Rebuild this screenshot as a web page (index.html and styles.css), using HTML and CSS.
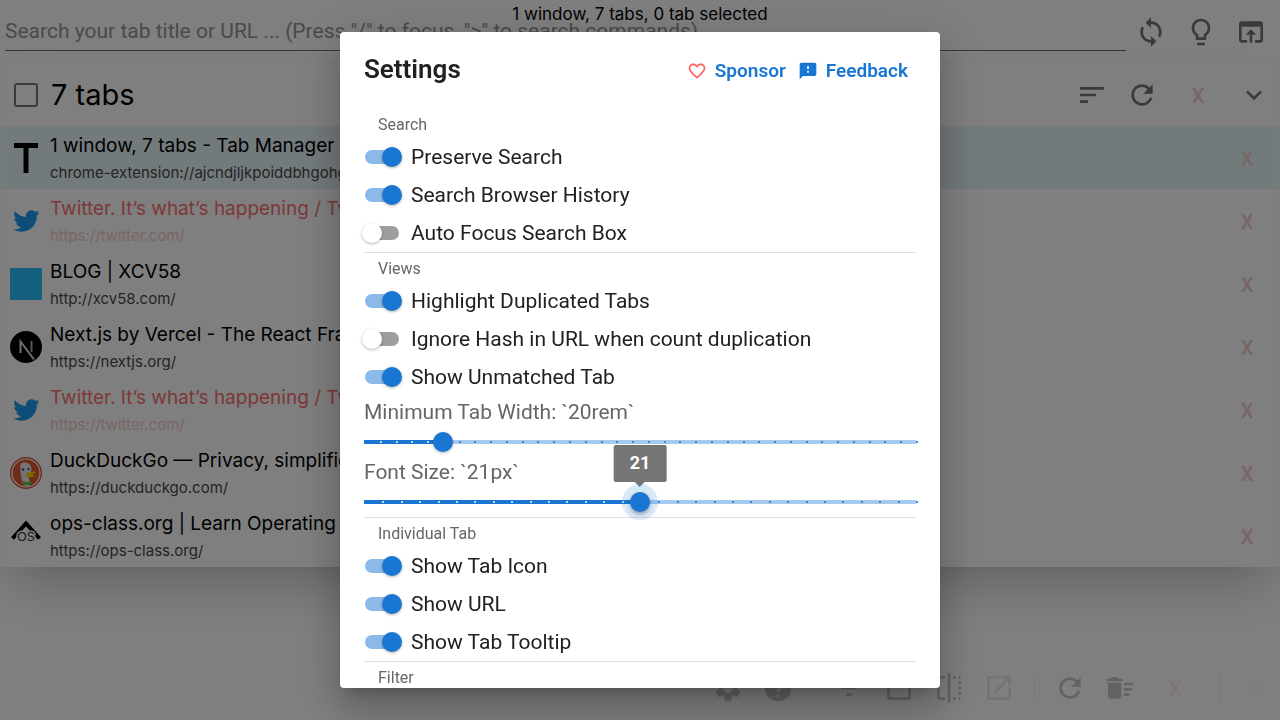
FILE: index.html
```html
<!DOCTYPE html>
<html lang="en">
<head>
<meta charset="utf-8">
<title>Tab Manager</title>
<link rel="stylesheet" href="styles.css">
</head>
<body>
<svg class="defs" aria-hidden="true">
  <symbol id="i-sync" viewBox="0 0 24 24"><path d="M12 4V1L8 5l4 4V6c3.31 0 6 2.69 6 6 0 1.01-.25 1.97-.7 2.8l1.46 1.46C19.54 15.03 20 13.57 20 12c0-4.42-3.58-8-8-8zm0 14c-3.31 0-6-2.69-6-6 0-1.01.25-1.97.7-2.8L5.24 7.74C4.46 8.97 4 10.43 4 12c0 4.42 3.58 8 8 8v3l4-4-4-4v3z"/></symbol>
  <symbol id="i-bulb" viewBox="0 0 24 24"><path d="M9 21c0 .55.45 1 1 1h4c.55 0 1-.45 1-1v-1H9v1zm3-19C8.14 2 5 5.14 5 9c0 2.38 1.19 4.47 3 5.74V17c0 .55.45 1 1 1h6c.55 0 1-.45 1-1v-2.26c1.81-1.27 3-3.36 3-5.74 0-3.86-3.14-7-7-7zm2.85 11.1-.85.6V16h-4v-2.3l-.85-.6C7.8 12.16 7 10.63 7 9c0-2.76 2.24-5 5-5s5 2.24 5 5c0 1.63-.8 3.16-2.15 4.1z"/></symbol>
  <symbol id="i-browser" viewBox="0 0 24 24"><path d="M19 4H5c-1.11 0-2 .9-2 2v12c0 1.1.89 2 2 2h4v-2H5V8h14v10h-4v2h4c1.1 0 2-.9 2-2V6c0-1.1-.89-2-2-2zm-7 6-4 4h3v6h2v-6h3l-4-4z"/></symbol>
  <symbol id="i-sort" viewBox="0 0 24 24"><path d="M3 18h6v-2H3v2zM3 6v2h18V6H3zm0 7h12v-2H3v2z"/></symbol>
  <symbol id="i-refresh" viewBox="0 0 24 24"><path d="M17.65 6.35C16.2 4.9 14.21 4 12 4c-4.42 0-7.99 3.58-7.99 8s3.57 8 7.99 8c3.73 0 6.84-2.55 7.73-6h-2.08c-.82 2.33-3.04 4-5.65 4-3.31 0-6-2.69-6-6s2.69-6 6-6c1.66 0 3.14.69 4.22 1.78L13 11h7V4l-2.35 2.35z"/></symbol>
  <symbol id="i-more" viewBox="0 0 24 24"><path d="M16.59 8.59 12 13.17 7.41 8.59 6 10l6 6 6-6z"/></symbol>
  <symbol id="i-gear" viewBox="0 0 24 24"><path d="M19.14 12.94c.04-.3.06-.61.06-.94 0-.32-.02-.64-.07-.94l2.03-1.58c.18-.14.23-.41.12-.61l-1.92-3.32c-.12-.22-.37-.29-.59-.22l-2.39.96c-.5-.38-1.03-.7-1.62-.94l-.36-2.54c-.04-.24-.24-.41-.48-.41h-3.84c-.24 0-.43.17-.47.41l-.36 2.54c-.59.24-1.13.57-1.62.94l-2.39-.96c-.22-.08-.47 0-.59.22L2.74 8.87c-.12.21-.08.47.12.61l2.03 1.58c-.05.3-.09.63-.09.94s.02.64.07.94l-2.03 1.58c-.18.14-.23.41-.12.61l1.92 3.32c.12.22.37.29.59.22l2.39-.96c.5.38 1.03.7 1.62.94l.36 2.54c.05.24.24.41.48.41h3.84c.24 0 .44-.17.47-.41l.36-2.54c.59-.24 1.13-.56 1.62-.94l2.39.96c.22.08.47 0 .59-.22l1.92-3.32c.12-.22.07-.47-.12-.61l-2.01-1.58zM12 15.6c-1.98 0-3.6-1.62-3.6-3.6s1.62-3.6 3.6-3.6 3.6 1.62 3.6 3.6-1.62 3.6-3.6 3.6z"/></symbol>
  <symbol id="i-help" viewBox="0 0 24 24"><path d="M12 2C6.48 2 2 6.48 2 12s4.48 10 10 10 10-4.48 10-10S17.52 2 12 2zm1 17h-2v-2h2v2zm2.07-7.75-.9.92C13.45 12.9 13 13.5 13 15h-2v-.5c0-1.1.45-2.1 1.17-2.83l1.24-1.26c.37-.36.59-.86.59-1.41 0-1.1-.9-2-2-2s-2 .9-2 2H8c0-2.21 1.79-4 4-4s4 1.79 4 4c0 .88-.36 1.68-.93 2.25z"/></symbol>
  <symbol id="i-filter" viewBox="0 0 24 24"><path d="M10 18h4v-2h-4v2zM3 6v2h18V6H3zm3 7h12v-2H6v2z"/></symbol>
  <symbol id="i-box" viewBox="0 0 24 24"><path d="M19 5v14H5V5h14m0-2H5c-1.1 0-2 .9-2 2v14c0 1.1.9 2 2 2h14c1.1 0 2-.9 2-2V5c0-1.1-.9-2-2-2z"/></symbol>
  <symbol id="i-flip" viewBox="0 0 24 24"><path d="M15 21h2v-2h-2v2zm4-12h2V7h-2v2zM3 5v14c0 1.1.9 2 2 2h4v-2H5V5h4V3H5c-1.1 0-2 .9-2 2zm16-2v2h2c0-1.1-.9-2-2-2zm-8 20h2V1h-2v22zm8-6h2v-2h-2v2zM15 5h2V3h-2v2zm4 8h2v-2h-2v2zm0 8c1.1 0 2-.9 2-2h-2v2z"/></symbol>
  <symbol id="i-launch" viewBox="0 0 24 24"><path d="M19 19H5V5h7V3H5c-1.11 0-2 .9-2 2v14c0 1.1.89 2 2 2h14c1.1 0 2-.9 2-2v-7h-2v7zM14 3v2h3.59l-9.83 9.83 1.41 1.41L19 6.41V10h2V3h-7z"/></symbol>
  <symbol id="i-sweep" viewBox="0 0 24 24"><path d="M15 16h4v2h-4zm0-8h7v2h-7zm0 4h6v2h-6zM3 18c0 1.1.9 2 2 2h6c1.1 0 2-.9 2-2V8H3v10zM14 5h-3l-1-1H6L5 5H2v2h12z"/></symbol>
  <symbol id="i-next" viewBox="0 0 24 24"><path d="M10 6 8.59 7.41 13.17 12l-4.58 4.59L10 18l6-6z"/></symbol>
  <symbol id="i-heart" viewBox="0 0 24 24"><path d="M16.5 3c-1.74 0-3.41.81-4.5 2.09C10.91 3.81 9.24 3 7.5 3 4.42 3 2 5.42 2 8.5c0 3.78 3.4 6.86 8.55 11.54L12 21.35l1.45-1.32C18.6 15.36 22 12.28 22 8.5 22 5.42 19.58 3 16.5 3zm-4.4 15.55-.1.1-.1-.1C7.14 14.24 4 11.39 4 8.5 4 6.5 5.5 5 7.5 5c1.54 0 3.04.99 3.57 2.36h1.87C13.46 5.99 14.96 5 16.5 5c2 0 3.5 1.5 3.5 3.5 0 2.89-3.14 5.74-7.9 10.05z"/></symbol>
  <symbol id="i-feedback" viewBox="0 0 24 24"><path d="M20 2H4c-1.1 0-1.99.9-1.99 2L2 22l4-4h14c1.1 0 2-.9 2-2V4c0-1.1-.9-2-2-2zm-7 12h-2v-2h2v2zm0-4h-2V6h2v4z"/></symbol>
  <symbol id="i-bird" viewBox="0 0 24 24"><path d="M23.643 4.937c-.835.37-1.732.62-2.675.733.962-.576 1.7-1.49 2.048-2.578-.9.534-1.897.922-2.958 1.13-.85-.904-2.06-1.47-3.4-1.47-2.572 0-4.658 2.086-4.658 4.66 0 .364.042.718.12 1.06-3.873-.195-7.304-2.05-9.602-4.868-.4.69-.63 1.49-.63 2.342 0 1.616.823 3.043 2.072 3.878-.764-.025-1.482-.234-2.11-.583v.06c0 2.257 1.605 4.14 3.737 4.568-.392.106-.803.162-1.227.162-.3 0-.593-.028-.877-.082.593 1.85 2.313 3.198 4.352 3.234-1.595 1.25-3.604 1.995-5.786 1.995-.376 0-.747-.022-1.112-.065 2.062 1.323 4.51 2.093 7.14 2.093 8.57 0 13.255-7.098 13.255-13.254 0-.2-.005-.402-.014-.602.91-.658 1.7-1.477 2.323-2.41z"/></symbol>
</svg>

<div class="app">
  <p class="summary">1 window, 7 tabs, 0 tab selected</p>
  <header class="topbar">
    <input class="search" type="text" aria-label="Search tabs" placeholder='Search your tab title or URL ... (Press "/" to focus, "&gt;" to search commands)'>
    <div class="topbar-actions">
      <button class="icon-btn" aria-label="Sync"><svg class="icon"><use href="#i-sync"/></svg></button>
      <button class="icon-btn" aria-label="Theme"><svg class="icon"><use href="#i-bulb"/></svg></button>
      <button class="icon-btn" aria-label="Open in browser"><svg class="icon"><use href="#i-browser"/></svg></button>
    </div>
  </header>

  <main class="window">
    <div class="window-head">
      <input class="pick" type="checkbox" id="pick-all">
      <label class="window-title" for="pick-all">7 tabs</label>
      <div class="window-actions">
        <button class="icon-btn" aria-label="Sort"><svg class="icon"><use href="#i-sort"/></svg></button>
        <button class="icon-btn" aria-label="Reload"><svg class="icon"><use href="#i-refresh"/></svg></button>
        <button class="icon-btn close" aria-label="Close window">x</button>
        <button class="icon-btn" aria-label="Collapse"><svg class="icon"><use href="#i-more"/></svg></button>
      </div>
    </div>
    <ul class="tabs">
      <li class="tab current">
        <svg class="favicon" viewBox="0 0 32 32"><path d="M4 1h24v5H18.500v25h-5V6H4z" fill="#000"/></svg>
        <div class="tab-text"><span class="tab-title">1 window, 7 tabs - Tab Manager v2</span><span class="tab-url">chrome-extension://ajcndjljkpoiddbhgohg</span></div>
        <button class="icon-btn close" aria-label="Close tab">x</button>
      </li>
      <li class="tab duplicate">
        <svg class="favicon bird" viewBox="0 0 32 32"><use href="#i-bird" x="2" y="2" width="28" height="28"/></svg>
        <div class="tab-text"><span class="tab-title">Twitter. It’s what’s happening / Twitter</span><span class="tab-url">https://twitter.com/</span></div>
        <button class="icon-btn close" aria-label="Close tab">x</button>
      </li>
      <li class="tab">
        <svg class="favicon" viewBox="0 0 32 32"><path d="M0 0h32v32H0z" fill="#2cc0ff"/></svg>
        <div class="tab-text"><span class="tab-title">BLOG | XCV58</span><span class="tab-url">http://xcv58.com/</span></div>
        <button class="icon-btn close" aria-label="Close tab">x</button>
      </li>
      <li class="tab">
        <svg class="favicon" viewBox="0 0 32 32"><circle cx="16" cy="16" r="16"/><path d="M10.500 22V10.500L24 28.500" fill="none" stroke="#ddd" stroke-width="2"/><path d="M21.500 10v11" stroke="#aaa" stroke-width="2"/></svg>
        <div class="tab-text"><span class="tab-title">Next.js by Vercel - The React Framework</span><span class="tab-url">https://nextjs.org/</span></div>
        <button class="icon-btn close" aria-label="Close tab">x</button>
      </li>
      <li class="tab duplicate">
        <svg class="favicon bird" viewBox="0 0 32 32"><use href="#i-bird" x="2" y="2" width="28" height="28"/></svg>
        <div class="tab-text"><span class="tab-title">Twitter. It’s what’s happening / Twitter</span><span class="tab-url">https://twitter.com/</span></div>
        <button class="icon-btn close" aria-label="Close tab">x</button>
      </li>
      <li class="tab">
        <svg class="favicon" viewBox="0 0 32 32"><circle cx="16" cy="16" r="16" fill="#de5833"/><circle cx="16" cy="16" r="14" fill="none" stroke="#fff" stroke-width="1.200"/><path d="M13 28.500C12 23 10 16 10.500 11 9.500 7 12 5 15 5.500c4 0 6.500 3 6.500 7l-1 3-2 4 2 9c-3 1-5 1-7.500 0z" fill="#e8e8e8"/><circle cx="13" cy="12.500" r="1.300" fill="#2d4f8e"/><circle cx="18.500" cy="12" r="1.200" fill="#2d4f8e"/><path d="M16 17c2-2 6-2.500 10-2-1 2-4 2-5 3 2 .5 3.500 0 4 .5-1 2-7 2.500-9 .5z" fill="#fdd20a"/><path d="m13 24 4 1.500 4.500-1.500v5L17 27.500 13 29z" fill="#65bc46"/></svg>
        <div class="tab-text"><span class="tab-title">DuckDuckGo — Privacy, simplified.</span><span class="tab-url">https://duckduckgo.com/</span></div>
        <button class="icon-btn close" aria-label="Close tab">x</button>
      </li>
      <li class="tab">
        <svg class="favicon" viewBox="0 0 32 32"><path d="M2.500 18.500 16 3.500l13.500 15" fill="none" stroke="#000" stroke-width="4"/><text class="os" x="16" y="21" text-anchor="middle">OS</text></svg>
        <div class="tab-text"><span class="tab-title">ops-class.org | Learn Operating Systems</span><span class="tab-url">https://ops-class.org/</span></div>
        <button class="icon-btn close" aria-label="Close tab">x</button>
      </li>
    </ul>
  </main>

  <footer class="toolbar">
    <button class="icon-btn" aria-label="Settings"><svg class="icon"><use href="#i-gear"/></svg></button>
    <button class="icon-btn" aria-label="Help"><svg class="icon"><use href="#i-help"/></svg></button>
    <span class="rule"></span>
    <button class="icon-btn" aria-label="Filter"><svg class="icon"><use href="#i-filter"/></svg></button>
    <button class="icon-btn" aria-label="Select all"><svg class="icon"><use href="#i-box"/></svg></button>
    <button class="icon-btn" aria-label="Invert selection"><svg class="icon"><use href="#i-flip"/></svg></button>
    <button class="icon-btn" aria-label="Open in new window" disabled><svg class="icon"><use href="#i-launch"/></svg></button>
    <span class="rule"></span>
    <button class="icon-btn" aria-label="Reload all"><svg class="icon"><use href="#i-refresh"/></svg></button>
    <button class="icon-btn" aria-label="Clean duplicates"><svg class="icon"><use href="#i-sweep"/></svg></button>
    <button class="icon-btn close" aria-label="Close selected">x</button>
    <span class="rule"></span>
    <button class="icon-btn faint" aria-label="Hide toolbar"><svg class="icon"><use href="#i-next"/></svg></button>
  </footer>
</div>

<div class="backdrop">
  <section class="dialog" role="dialog" aria-modal="true" aria-labelledby="dlg-title">
    <header class="dialog-head">
      <h2 class="dialog-title" id="dlg-title">Settings</h2>
      <nav class="dialog-links">
        <a class="link" href="#sponsor"><svg class="link-icon heart"><use href="#i-heart"/></svg>Sponsor</a>
        <a class="link" href="#feedback"><svg class="link-icon"><use href="#i-feedback"/></svg>Feedback</a>
      </nav>
    </header>
    <div class="dialog-body">
      <section class="group">
        <h3 class="subheader">Search</h3>
        <label class="option"><input class="switch" type="checkbox" checked>Preserve Search</label>
        <label class="option"><input class="switch" type="checkbox" checked>Search Browser History</label>
        <label class="option"><input class="switch" type="checkbox">Auto Focus Search Box</label>
      </section>
      <section class="group">
        <h3 class="subheader">Views</h3>
        <label class="option"><input class="switch" type="checkbox" checked>Highlight Duplicated Tabs</label>
        <label class="option"><input class="switch" type="checkbox">Ignore Hash in URL when count duplication</label>
        <label class="option"><input class="switch" type="checkbox" checked>Show Unmatched Tab</label>
        <div class="sliders">
          <label class="slider-label" for="tab-width">Minimum Tab Width: `20rem`</label>
          <div class="slider"><div class="rail"></div><input class="range" id="tab-width" type="range" min="15" max="50" value="20"></div>
          <label class="slider-label" for="font-size">Font Size: `21px`</label>
          <div class="slider"><div class="rail"></div><output class="bubble" for="font-size">21</output><input class="range active" id="font-size" type="range" min="6" max="36" value="21"></div>
        </div>
      </section>
      <section class="group">
        <h3 class="subheader">Individual Tab</h3>
        <label class="option"><input class="switch" type="checkbox" checked>Show Tab Icon</label>
        <label class="option"><input class="switch" type="checkbox" checked>Show URL</label>
        <label class="option"><input class="switch" type="checkbox" checked>Show Tab Tooltip</label>
      </section>
      <section class="group">
        <h3 class="subheader">Filter</h3>
      </section>
    </div>
  </section>
</div>
<script src="sliders.js"></script>
</body>
</html>
```

FILE: styles.css
```css
* { box-sizing: border-box; }

body {
  margin: 0;
  height: 100vh;
  overflow: hidden;
  font-family: Inter, "Liberation Sans", sans-serif;
  color: #000;
  background: #fff;
}

button { padding: 0; border: 0; background: none; font: inherit; cursor: pointer; }
h2, h3, p, ul { margin: 0; padding: 0; font-weight: inherit; }

.defs { position: absolute; width: 0; height: 0; }

/* Tab list */
.app { position: relative; display: flex; flex-direction: column; height: 100vh; }

.summary {
  position: absolute;
  inset: 4px 0 auto;
  text-align: center;
  font-size: 17px;
  line-height: 20px;
}

.topbar { display: flex; align-items: center; height: 64px; padding: 0 4px 0 5px; }

.search {
  flex: 1;
  height: 40px;
  margin-bottom: 2px;
  padding: 0;
  border: 0;
  border-bottom: 1px solid #6c6c6c;
  background: none;
  font-family: Roboto, sans-serif;
  font-size: 21px;
  outline: 0;
}
.search::placeholder { color: #949494; opacity: 1; }

.topbar-actions { display: flex; }

.icon-btn {
  display: flex;
  align-items: center;
  justify-content: center;
  width: 50px;
  height: 50px;
  color: #757575;
}
.icon { width: 32px; height: 32px; fill: currentColor; }

.close {
  width: 60px;
  padding-top: 2px;
  font-family: Roboto, sans-serif;
  font-size: 20px;
  font-weight: 500;
  text-transform: uppercase;
  color: #f5caca;
}

.window {
  border: solid #f6f6f6;
  border-width: 0 1px;
  background: #fff;
  box-shadow: 0 25px 50px -12px rgba(0, 0, 0, .25);
}

.window-head { display: flex; align-items: center; height: 62px; padding-left: 13px; }
.window-head .close { width: 62px; }
.pick {
  appearance: none;
  width: 24px;
  height: 24px;
  margin: 0 13px 0 0;
  border: 2px solid #757575;
  border-radius: 3px;
}
.window-title { font-size: 29px; line-height: 40px; }
.window-actions { display: flex; margin-left: auto; }

.tabs { list-style: none; }
.tab { display: flex; align-items: center; height: 63px; padding: 0 2px 0 9px; }
.tab.current { background: #e6f4f8; }
.favicon { flex: none; width: 32px; height: 32px; }
.bird { fill: #1d9bf0; }
.os { font: 12px "Liberation Sans", sans-serif; fill: #333; stroke: #fff; stroke-width: 3px; paint-order: stroke; }
.tab-text { flex: 1; min-width: 0; display: flex; flex-direction: column; padding: 2px 0 0 8px; }
.tab-title { font-size: 19px; line-height: 28px; white-space: nowrap; }
.tab-url { font-size: 15px; line-height: 26px; color: #484848; }
.duplicate .tab-title { color: #f87171; }
.duplicate .tab-url { color: #f5caca; }

.toolbar { display: flex; align-items: center; justify-content: flex-end; height: 64px; margin-top: auto; opacity: .4; }
.toolbar .icon-btn:disabled { opacity: .4; }
.toolbar .faint { opacity: .1; }
.rule { width: 1px; height: 30px; margin: 0 10px; background: #ddd; }
.close + .rule { margin-left: 14px; }

/* Settings dialog */
.backdrop {
  position: fixed;
  inset: 0;
  display: flex;
  justify-content: center;
  padding: 32px;
  background: rgba(0, 0, 0, .5);
}

.dialog {
  display: flex;
  flex-direction: column;
  width: 100%;
  max-width: 600px;
  border-radius: 4px;
  overflow: hidden;
  background: #fff;
  color: #212121;
  font-family: Roboto, sans-serif;
  box-shadow: 0 11px 15px -7px rgba(0, 0, 0, .2), 0 24px 38px 3px rgba(0, 0, 0, .14), 0 9px 46px 8px rgba(0, 0, 0, .12);
}

.dialog-head { flex: none; display: flex; align-items: center; justify-content: space-between; height: 77px; padding: 0 32px 0 24px; }
.dialog-title { padding-bottom: 3px; font-size: 26px; font-weight: 600; line-height: 40px; }
.dialog-links { display: flex; gap: 12px; }
.link { display: flex; align-items: center; gap: 8px; font-size: 19px; font-weight: 600; color: #1976d2; text-decoration: none; }
.link-icon { width: 20px; height: 20px; fill: currentColor; }
.heart { color: #ff6060; }

.dialog-body { flex: 1; min-height: 0; padding: 0 24px; overflow: hidden; }
.group + .group { border-top: 1px solid #e0e0e0; }
.subheader { padding: 2px 14px 0; font-size: 16px; line-height: 27px; color: #666; }

.option { display: flex; align-items: center; gap: 12px; height: 38px; padding-left: 1px; font-size: 21px; }
.switch {
  appearance: none;
  position: relative;
  flex: none;
  width: 34px;
  height: 14px;
  margin: 0;
  border-radius: 7px;
  background: #9e9e9e;
}
.switch::before {
  content: "";
  position: absolute;
  top: -3px;
  left: -3px;
  width: 20px;
  height: 20px;
  border-radius: 50%;
  background: #fff;
  box-shadow: 0 1px 3px rgba(0, 0, 0, .3);
}
.switch:checked { background: #8cbae8; }
.switch:checked::before { left: 17px; background: #1976d2; }

.sliders { padding-top: 1px; }
.slider-label { display: block; font-size: 21px; line-height: 30px; color: #666; }
.slider { position: relative; display: flex; align-items: center; height: 30px; }
.rail { position: relative; flex: 1; height: 4px; background: #a8caed; }
.fill { height: 4px; background: #1976d2; }
.tick { position: absolute; top: 1px; width: 2px; height: 2px; background: #3b8ad8; }
.tick.passed { background: #bcd7f2; }

.range { appearance: none; position: absolute; inset: 0 -10px; width: auto; min-width: calc(100% + 20px); height: 30px; margin: 0; background: none; }
.range::-webkit-slider-thumb {
  appearance: none;
  width: 20px;
  height: 20px;
  border-radius: 50%;
  background: #1976d2;
  box-shadow: 0 1px 3px rgba(0, 0, 0, .3);
}
.range.active::-webkit-slider-thumb { box-shadow: 0 0 0 8px rgba(25, 118, 210, .16), 0 2px 4px rgba(0, 0, 0, .4); }

.bubble {
  position: absolute;
  bottom: 35px;
  left: 50%;
  padding: 5px 16px 7px;
  border-radius: 2px;
  background: #757575;
  color: #fff;
  font-size: 18px;
  font-weight: 700;
  line-height: 25px;
  transform: translateX(-50%);
}
.bubble::after {
  content: "";
  position: absolute;
  top: 100%;
  left: 50%;
  margin-left: -5px;
  border: 5px solid transparent;
  border-top-color: #757575;
  border-bottom: 0;
}
```

FILE: sliders.js
```js
// Draws the filled part and one tick per step on each slider's rail.
document.querySelectorAll('.slider').forEach((slider) => {
  const rail = slider.querySelector('.rail');
  const range = slider.querySelector('.range');
  const min = Number(range.min);
  const max = Number(range.max);
  const value = Number(range.value);
  const percent = (n) => `${((n - min) / (max - min)) * 100}%`;

  const fill = document.createElement('div');
  fill.className = 'fill';
  fill.style.width = percent(value);
  rail.append(fill);

  for (let n = min + 1; n <= max; n += 1) {
    const tick = document.createElement('span');
    tick.className = n <= value ? 'tick passed' : 'tick';
    tick.style.left = percent(n);
    rail.append(tick);
  }
});
```
